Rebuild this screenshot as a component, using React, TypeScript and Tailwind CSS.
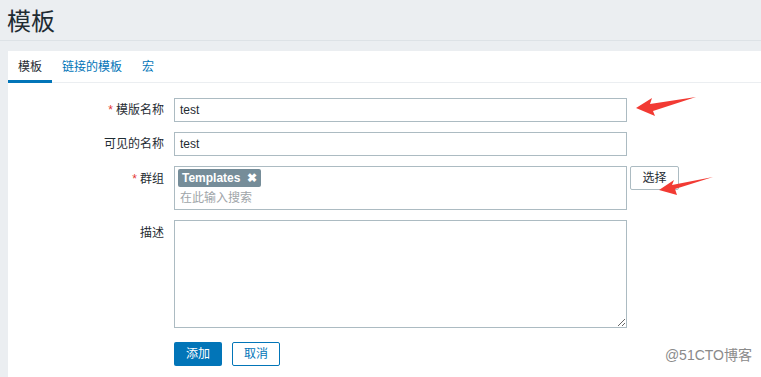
import React from 'react';

const font = "font-['Arial','Liberation_Sans','Noto_Sans_CJK_SC',sans-serif]";

const tabs = [
  { id: 'template', label: '模板', active: true },
  { id: 'linked', label: '链接的模板' },
  { id: 'macros', label: '宏' }
];

function Label({ text, required, className = '' }: { text: string; required?: boolean; className?: string }) {
  return (
    <div className={`w-[156px] shrink-0 text-right text-[12px] text-[#1f2c33] ${className}`}>
      {required && <span className="text-[#e33734] mr-[3px]">*</span>}
      {text}
    </div>
  );
}

function Arrow({ d }: { d: string }) {
  return <path d={d} fill="#f23a33" />;
}

export default function App() {
  return (
    <div className={`relative min-h-[377px] bg-[#ebeef1] ${font} flex flex-col`}>
      <div className="h-[41px] px-[7px] border-b border-[#dde2e6] flex items-center pt-[4px]">
        <h1 className="text-[24px] font-normal text-[#1f2c33] leading-none">模板</h1>
      </div>

      <div className="mt-[10px] ml-[8px] bg-white flex-1 flex flex-col">
        <div className="flex h-[32px] border-b border-[#ebeef1]">
          {tabs.map((tab) => (
            <div
              key={tab.id}
              className={`px-[10px] text-[12px] flex items-center pt-[2px] border-b-[3px] -mb-px ${
                tab.active ? 'border-[#0275b8] text-[#1f2c33]' : 'border-transparent text-[#0275b8]'
              }`}
            >
              {tab.label}
            </div>
          ))}
        </div>

        <div className="pt-[15px] flex flex-col gap-[10px]">
          <div className="flex items-center gap-[10px]">
            <Label text="模版名称" required />
            <div className="w-[453px] h-[24px] border border-[#acbbc2] px-[5px] flex items-center text-[12px] text-[#1f2c33]">
              test
            </div>
          </div>

          <div className="flex items-center gap-[10px]">
            <Label text="可见的名称" />
            <div className="w-[453px] h-[24px] border border-[#acbbc2] px-[5px] flex items-center text-[12px] text-[#1f2c33]">
              test
            </div>
          </div>

          <div className="flex items-start gap-[10px]">
            <Label text="群组" required className="pt-[4px]" />
            <div className="w-[453px] h-[44px] border border-[#acbbc2] px-[3px] pt-[2px] flex flex-col">
              <div className="self-start h-[18px] bg-[#768d99] rounded-[2px] px-[4px] flex items-center gap-[7px] text-[12px] font-bold text-white">
                <span>Templates</span>
                <span className="text-[12px] leading-none">✖</span>
              </div>
              <div className="px-[2px] mt-[2px] text-[12px] text-[#a0a5a9]">在此输入搜索</div>
            </div>
            <button className="ml-[-7px] h-[24px] w-[49px] border border-[#acbbc2] rounded-[2px] bg-white text-[12px] text-[#1f2c33]">
              选择
            </button>
          </div>

          <div className="flex items-start gap-[10px]">
            <Label text="描述" className="pt-[4px]" />
            <textarea className="block w-[453px] h-[108px] border border-[#acbbc2] outline-none resize" />
          </div>

          <div className="flex items-center gap-[10px] pt-[4px]">
            <div className="w-[156px] shrink-0" />
            <button className="h-[24px] w-[48px] rounded-[2px] bg-[#0275b8] text-white text-[12px]">添加</button>
            <button className="h-[24px] w-[48px] rounded-[2px] border border-[#0275b8] bg-white text-[#0275b8] text-[12px]">
              取消
            </button>
          </div>
        </div>
      </div>

      <svg className="absolute left-0 top-0 pointer-events-none" width="761" height="377">
        <Arrow d="M636 108 L652 98 L650 104 L696 97 L653 111 L655 116 Z" />
        <Arrow d="M659 190 L674 180 L672 185 L713 177 L675 189 L677 195 Z" />
      </svg>

      <div className="absolute right-[9px] bottom-[11px] text-[14px] text-[#8a8a8a] font-['Liberation_Sans','Noto_Sans_CJK_SC',sans-serif]">
        @51CTO博客
      </div>
    </div>
  );
}
